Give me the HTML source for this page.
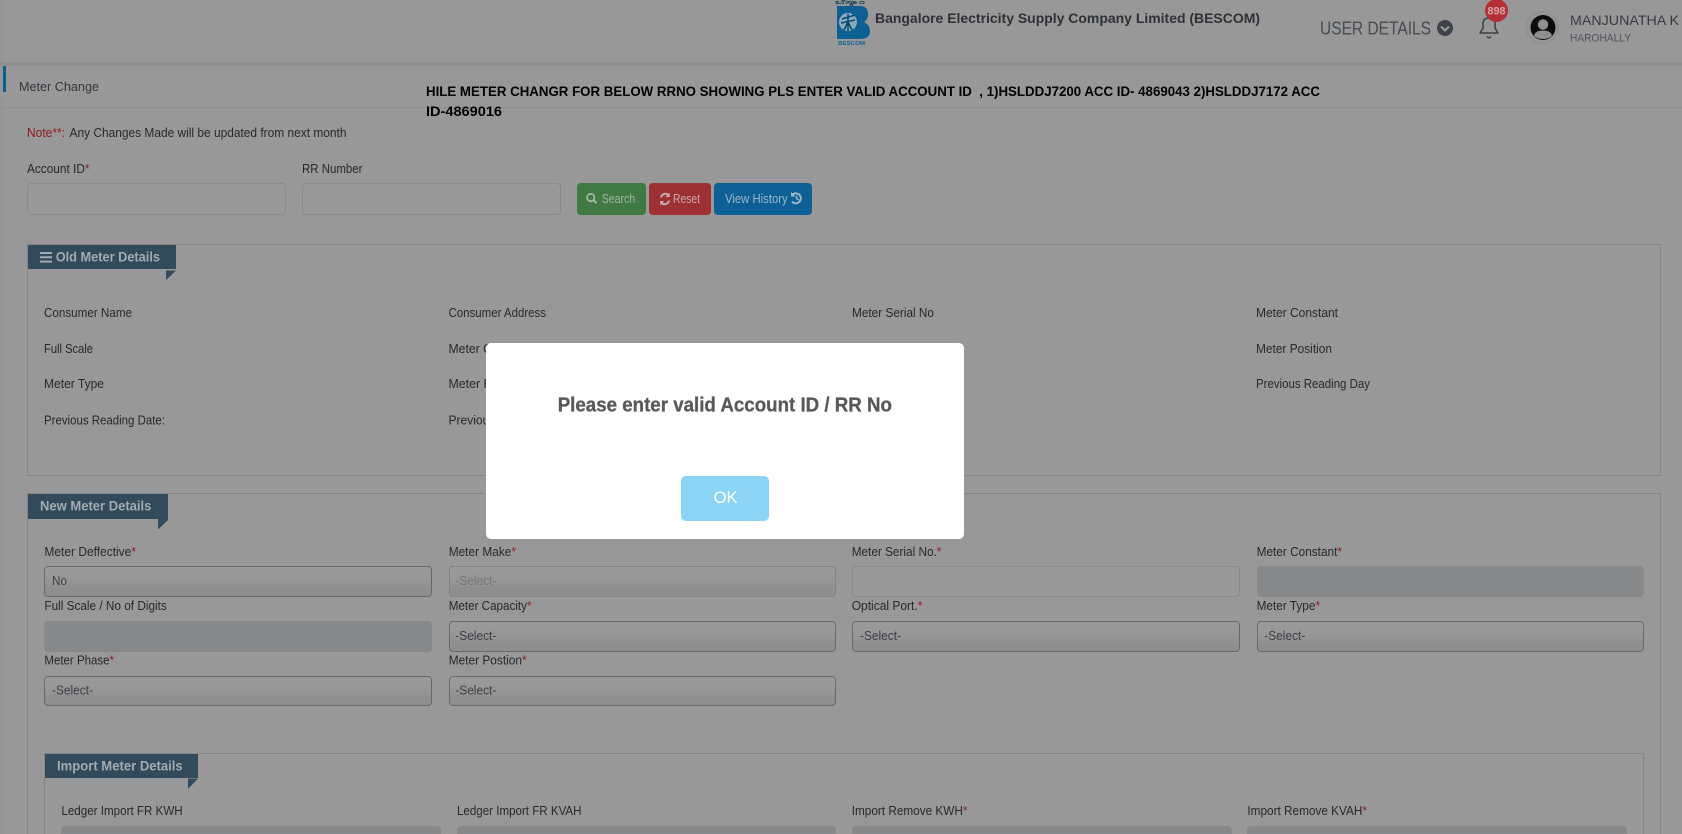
<!DOCTYPE html>
<html lang="en">
<head>
<meta charset="utf-8">
<title>Meter Change</title>
<style>
html,body{margin:0;padding:0;width:1682px;height:834px;overflow:hidden;background:#989898;font-family:"Liberation Sans",sans-serif}
#page{position:relative;width:1682px;height:834px;overflow:hidden;background:#989898}
.a{position:absolute;box-sizing:border-box}
.inp{border:1px solid #8a8a8a;border-radius:4px;background:#999}
.dis{border-radius:4px;background:#87888a}
.sel{border:1px solid #666a6e;border-radius:4px;background:linear-gradient(#9a9a9a 0,#969696 50%,#8f8f8f 72%,#8e8e8e 100%)}
.sel.off{border-color:#838383}
.fs{border:1px solid #868686}
.hd{background:#334a5a}
.btn{border-radius:4px}
svg{position:absolute;left:0;top:0}
text{font-family:"Liberation Sans",sans-serif;font-size:13px;fill:#26292d}
.s{fill:#8f1a1e}
.hdt{font-weight:700;font-size:14px;fill:#a3abb1}
.v{fill:#3c4045}
</style>
</head>
<body>
<div id="page">
<!-- structure -->
<div class="a" style="left:0;top:0;width:3px;height:834px;background:#959595"></div>
<div class="a" style="left:0;top:62px;width:1682px;height:4px;background:#8e8e8e"></div>
<div class="a" style="left:3px;top:107px;width:1679px;height:1px;background:#8f8f8f"></div>
<div class="a" style="left:3px;top:66px;width:3px;height:26px;background:#0d5f8f"></div>

<div class="a inp" style="left:27px;top:183px;width:259px;height:32px"></div>
<div class="a inp" style="left:302px;top:183px;width:259px;height:32px"></div>
<div class="a btn" style="left:577px;top:183px;width:69px;height:32px;background:#3f7a42"></div>
<div class="a btn" style="left:649px;top:183px;width:62px;height:32px;background:#9c3033"></div>
<div class="a btn" style="left:714px;top:183px;width:98px;height:32px;background:#0d6096"></div>

<div class="a fs" style="left:27px;top:244px;width:1634px;height:232px"></div>
<div class="a hd" style="left:28px;top:245px;width:148px;height:24px"></div>

<div class="a fs" style="left:27px;top:493px;width:1634px;height:341px;border-bottom:0"></div>
<div class="a hd" style="left:28px;top:494px;width:140px;height:25px"></div>

<div class="a sel" style="left:44px;top:566px;width:388px;height:31px"></div>
<div class="a sel off" style="left:449px;top:566px;width:387px;height:31px"></div>
<div class="a inp" style="left:852px;top:566px;width:388px;height:31px"></div>
<div class="a dis" style="left:1257px;top:566px;width:387px;height:31px"></div>

<div class="a dis" style="left:44px;top:621px;width:388px;height:31px"></div>
<div class="a sel" style="left:449px;top:621px;width:387px;height:31px"></div>
<div class="a sel" style="left:852px;top:621px;width:388px;height:31px"></div>
<div class="a sel" style="left:1257px;top:621px;width:387px;height:31px"></div>

<div class="a sel" style="left:44px;top:676px;width:388px;height:30px"></div>
<div class="a sel" style="left:449px;top:676px;width:387px;height:30px"></div>

<div class="a fs" style="left:44px;top:753px;width:1600px;height:81px;border-bottom:0"></div>
<div class="a hd" style="left:45px;top:754px;width:153px;height:24px"></div>
<div class="a dis" style="left:61px;top:826px;width:380px;height:8px;border-radius:4px 4px 0 0"></div>
<div class="a dis" style="left:457px;top:826px;width:379px;height:8px;border-radius:4px 4px 0 0"></div>
<div class="a dis" style="left:852px;top:826px;width:380px;height:8px;border-radius:4px 4px 0 0"></div>
<div class="a dis" style="left:1247px;top:826px;width:380px;height:8px;border-radius:4px 4px 0 0"></div>

<svg width="1682" height="834" viewBox="0 0 1682 834" xmlns="http://www.w3.org/2000/svg">
  <!-- logo -->
  <text x="835" y="4" textLength="30" lengthAdjust="spacingAndGlyphs" style="font-size:6px;font-weight:700;fill:#1a3f58;font-family:'Liberation Sans','DejaVu Sans',sans-serif">ಬೆಸ್ಕಾಂ</text>
  <path d="M837 6H860Q868 6 868 14Q868 20 864 22Q870 25 870 31Q870 39 860 39H837Z" fill="#0e6094"/>
  <circle cx="848" cy="22" r="9" fill="#8aa9bc"/>
  <path d="M848 14V31M842 19L855 15M841 23L855 20M844 30L848 22L852 30" stroke="#0b4a72" stroke-width="1.6" fill="none"/>
  <text x="838" y="45" textLength="27" lengthAdjust="spacingAndGlyphs" style="font-size:5.5px;font-weight:700;fill:#0e6094">BESCOM</text>

  <!-- header -->
  <text x="875" y="23" textLength="385" lengthAdjust="spacingAndGlyphs" style="font-size:14px;font-weight:700;fill:#2e3135">Bangalore Electricity Supply Company Limited (BESCOM)</text>
  <text x="1320" y="34.5" textLength="111" lengthAdjust="spacingAndGlyphs" style="font-size:18px;fill:#474c52">USER DETAILS</text>
  <circle cx="1445" cy="28" r="8" fill="#3e4349"/>
  <path d="M1441 26.5L1445 30.5L1449 26.5" stroke="#999" stroke-width="2.2" fill="none"/>
  <path d="M1480 33H1498L1495 28V24Q1495 18 1489 18Q1483 18 1483 24V28Z" stroke="#3c4147" stroke-width="1.5" fill="none" stroke-linejoin="round"/>
  <path d="M1487 36.5Q1489 39 1491 36.5" stroke="#3c4147" stroke-width="1.5" fill="none"/>
  <circle cx="1496.5" cy="10.5" r="11.5" fill="#b32f33"/>
  <text x="1487.5" y="14.5" textLength="18" lengthAdjust="spacingAndGlyphs" style="font-size:11px;font-weight:700;fill:#d2a8a8">898</text>
  <circle cx="1542" cy="27.5" r="16" fill="#959595" stroke="#8d8d8d"/>
  <circle cx="1543" cy="27.5" r="12.5" fill="#0c0c0c"/>
  <circle cx="1543" cy="24.5" r="5.2" fill="#8f8f8f"/>
  <path d="M1534 36Q1535 30.5 1543 30.5Q1551 30.5 1552 36Q1548 39 1543 39Q1538 39 1534 36Z" fill="#8f8f8f"/>
  <text x="1570" y="25" textLength="109" lengthAdjust="spacingAndGlyphs" style="font-size:14px;fill:#383c42">MANJUNATHA K</text>
  <text x="1570" y="41.5" textLength="61" lengthAdjust="spacingAndGlyphs" style="font-size:11px;fill:#50555d">HAROHALLY</text>

  <g transform="translate(0,-0.7)">
  <!-- title & comment -->
  <text x="19" y="91.5" textLength="80" lengthAdjust="spacingAndGlyphs" style="fill:#34383f">Meter Change</text>
  <text x="426" y="96.8" textLength="894" lengthAdjust="spacingAndGlyphs" style="font-size:13.5px;font-weight:700;fill:#000" xml:space="preserve">HILE METER CHANGR FOR BELOW RRNO SHOWING PLS ENTER VALID ACCOUNT ID  , 1)HSLDDJ7200 ACC ID- 4869043 2)HSLDDJ7172 ACC</text>
  <text x="426" y="116.5" textLength="76" lengthAdjust="spacingAndGlyphs" style="font-size:13.5px;font-weight:700;fill:#000">ID-4869016</text>

  <text x="27" y="137.5" textLength="38" lengthAdjust="spacingAndGlyphs" style="fill:#8f1a1e">Note**:</text>
  <text x="69.5" y="137.5" textLength="277" lengthAdjust="spacingAndGlyphs">Any Changes Made will be updated from next month</text>

  <text x="27" y="173.5" textLength="62.5" lengthAdjust="spacingAndGlyphs">Account ID<tspan class="s">*</tspan></text>
  <text x="302" y="173.5" textLength="60.5" lengthAdjust="spacingAndGlyphs">RR Number</text>

  <!-- old meter -->
  <path d="M40 253.7H52M40 258H52M40 262.3H52" stroke="#a3abb1" stroke-width="2"/>
  <text class="hdt" x="55.7" y="262" textLength="104.3" lengthAdjust="spacingAndGlyphs">Old Meter Details</text>
  <text x="44" y="317.5" textLength="88" lengthAdjust="spacingAndGlyphs">Consumer Name</text>
  <text x="448.5" y="317.5" textLength="97.5" lengthAdjust="spacingAndGlyphs">Consumer Address</text>
  <text x="852" y="317.5" textLength="82" lengthAdjust="spacingAndGlyphs">Meter Serial No</text>
  <text x="1256" y="317.5" textLength="82" lengthAdjust="spacingAndGlyphs">Meter Constant</text>
  <text x="44" y="353.5" textLength="49" lengthAdjust="spacingAndGlyphs">Full Scale</text>
  <text x="448.5" y="353.5" textLength="82" lengthAdjust="spacingAndGlyphs">Meter Capacity</text>
  <text x="1256" y="353.5" textLength="76" lengthAdjust="spacingAndGlyphs">Meter Position</text>
  <text x="44" y="388.5" textLength="60" lengthAdjust="spacingAndGlyphs">Meter Type</text>
  <text x="448.5" y="388.5" textLength="70" lengthAdjust="spacingAndGlyphs">Meter Phase</text>
  <text x="1256" y="388.5" textLength="114" lengthAdjust="spacingAndGlyphs">Previous Reading Day</text>
  <text x="44" y="425" textLength="121" lengthAdjust="spacingAndGlyphs">Previous Reading Date:</text>
  <text x="448.5" y="425" textLength="95" lengthAdjust="spacingAndGlyphs">Previous Reading</text>

  <!-- new meter -->
  <text class="hdt" x="40" y="511" textLength="111.4" lengthAdjust="spacingAndGlyphs">New Meter Details</text>
  <text x="44.4" y="556.5" textLength="91.6" lengthAdjust="spacingAndGlyphs">Meter Deffective<tspan class="s">*</tspan></text>
  <text x="448.7" y="556.5" textLength="67.3" lengthAdjust="spacingAndGlyphs">Meter Make<tspan class="s">*</tspan></text>
  <text x="851.7" y="556.5" textLength="89.7" lengthAdjust="spacingAndGlyphs">Meter Serial No.<tspan class="s">*</tspan></text>
  <text x="1256.6" y="556.5" textLength="85.4" lengthAdjust="spacingAndGlyphs">Meter Constant<tspan class="s">*</tspan></text>
  <text class="v" x="52" y="585.5" textLength="15" lengthAdjust="spacingAndGlyphs">No</text>
  <text x="455.3" y="585.5" textLength="41" lengthAdjust="spacingAndGlyphs" style="fill:#72757a">-Select-</text>

  <text x="44.4" y="610.5" textLength="122.4" lengthAdjust="spacingAndGlyphs">Full Scale / No of Digits</text>
  <text x="448.7" y="610.5" textLength="82.8" lengthAdjust="spacingAndGlyphs">Meter Capacity<tspan class="s">*</tspan></text>
  <text x="851.7" y="610.5" textLength="70.7" lengthAdjust="spacingAndGlyphs">Optical Port.<tspan class="s">*</tspan></text>
  <text x="1256.6" y="610.5" textLength="63.4" lengthAdjust="spacingAndGlyphs">Meter Type<tspan class="s">*</tspan></text>
  <text class="v" x="455.3" y="640.5" textLength="41" lengthAdjust="spacingAndGlyphs">-Select-</text>
  <text class="v" x="860" y="640.5" textLength="41" lengthAdjust="spacingAndGlyphs">-Select-</text>
  <text class="v" x="1264.3" y="640.5" textLength="41" lengthAdjust="spacingAndGlyphs">-Select-</text>

  <text x="44.4" y="665" textLength="69.6" lengthAdjust="spacingAndGlyphs">Meter Phase<tspan class="s">*</tspan></text>
  <text x="448.7" y="665" textLength="77.9" lengthAdjust="spacingAndGlyphs">Meter Postion<tspan class="s">*</tspan></text>
  <text class="v" x="52" y="695" textLength="41" lengthAdjust="spacingAndGlyphs">-Select-</text>
  <text class="v" x="455.3" y="695" textLength="41" lengthAdjust="spacingAndGlyphs">-Select-</text>

  <!-- import -->
  <text class="hdt" x="57" y="771" textLength="125.7" lengthAdjust="spacingAndGlyphs">Import Meter Details</text>
  <text x="61.4" y="815.5" textLength="121.3" lengthAdjust="spacingAndGlyphs">Ledger Import FR KWH</text>
  <text x="457" y="815.5" textLength="124.5" lengthAdjust="spacingAndGlyphs">Ledger Import FR KVAH</text>
  <text x="851.7" y="815.5" textLength="115.8" lengthAdjust="spacingAndGlyphs">Import Remove KWH<tspan class="s">*</tspan></text>
  <text x="1247.4" y="815.5" textLength="119.6" lengthAdjust="spacingAndGlyphs">Import Remove KVAH<tspan class="s">*</tspan></text>
  </g>

  <!-- section folds -->
  <path d="M166 270.5H176L166 280Z" fill="#334a5a"/>
  <path d="M158 519H168V520L158 529.5Z" fill="#334a5a"/>
  <path d="M188 778.5H198L188 789Z" fill="#334a5a"/>

  <!-- buttons -->
  <circle cx="590.8" cy="197.5" r="3.7" stroke="#a3b7a5" stroke-width="1.8" fill="none"/>
  <path d="M593.5 200.2L596.5 203.2" stroke="#a3b7a5" stroke-width="2.2"/>
  <text x="601.7" y="203" textLength="33.5" lengthAdjust="spacingAndGlyphs" style="fill:#a3b7a5">Search</text>
  <path d="M661 197.5A4.5 4.5 0 0 1 668.5 195M669 200.5A4.5 4.5 0 0 1 661.5 203" stroke="#c9aaaa" stroke-width="2" fill="none"/>
  <path d="M669.8 192.8V197H665.6ZM660.2 205.2V201H664.4Z" fill="#c9aaaa"/>
  <text x="673" y="203" textLength="27" lengthAdjust="spacingAndGlyphs" style="fill:#c9aaaa">Reset</text>
  <text x="725" y="203" textLength="62.7" lengthAdjust="spacingAndGlyphs" style="fill:#9fb6c6">View History</text>
  <path d="M792.5 194.5A5 5 0 1 1 792 201.5" stroke="#9fb6c6" stroke-width="1.9" fill="none"/>
  <path d="M791 192V196.5H795.5Z" fill="#9fb6c6"/>
  <path d="M796.5 195.5V198.5L798.8 200" stroke="#9fb6c6" stroke-width="1.4" fill="none"/>
</svg>

<!-- dialog -->
<div class="a" style="left:486px;top:343px;width:478px;height:196px;background:#fff;border-radius:5px"></div>
<div class="a" style="left:681px;top:476px;width:88px;height:45px;background:#8cd4f5;border-radius:5px"></div>
<svg width="1682" height="834" viewBox="0 0 1682 834" xmlns="http://www.w3.org/2000/svg" style="z-index:5">
  <text x="557.7" y="411.5" textLength="334.3" lengthAdjust="spacingAndGlyphs" style="font-size:20px;font-weight:700;fill:#595959;stroke:#595959;stroke-width:.3">Please enter valid Account ID / RR No</text>
  <text x="713.6" y="503" textLength="24" lengthAdjust="spacingAndGlyphs" style="font-size:17px;fill:#fff">OK</text>
</svg>
</div>
</body>
</html>
